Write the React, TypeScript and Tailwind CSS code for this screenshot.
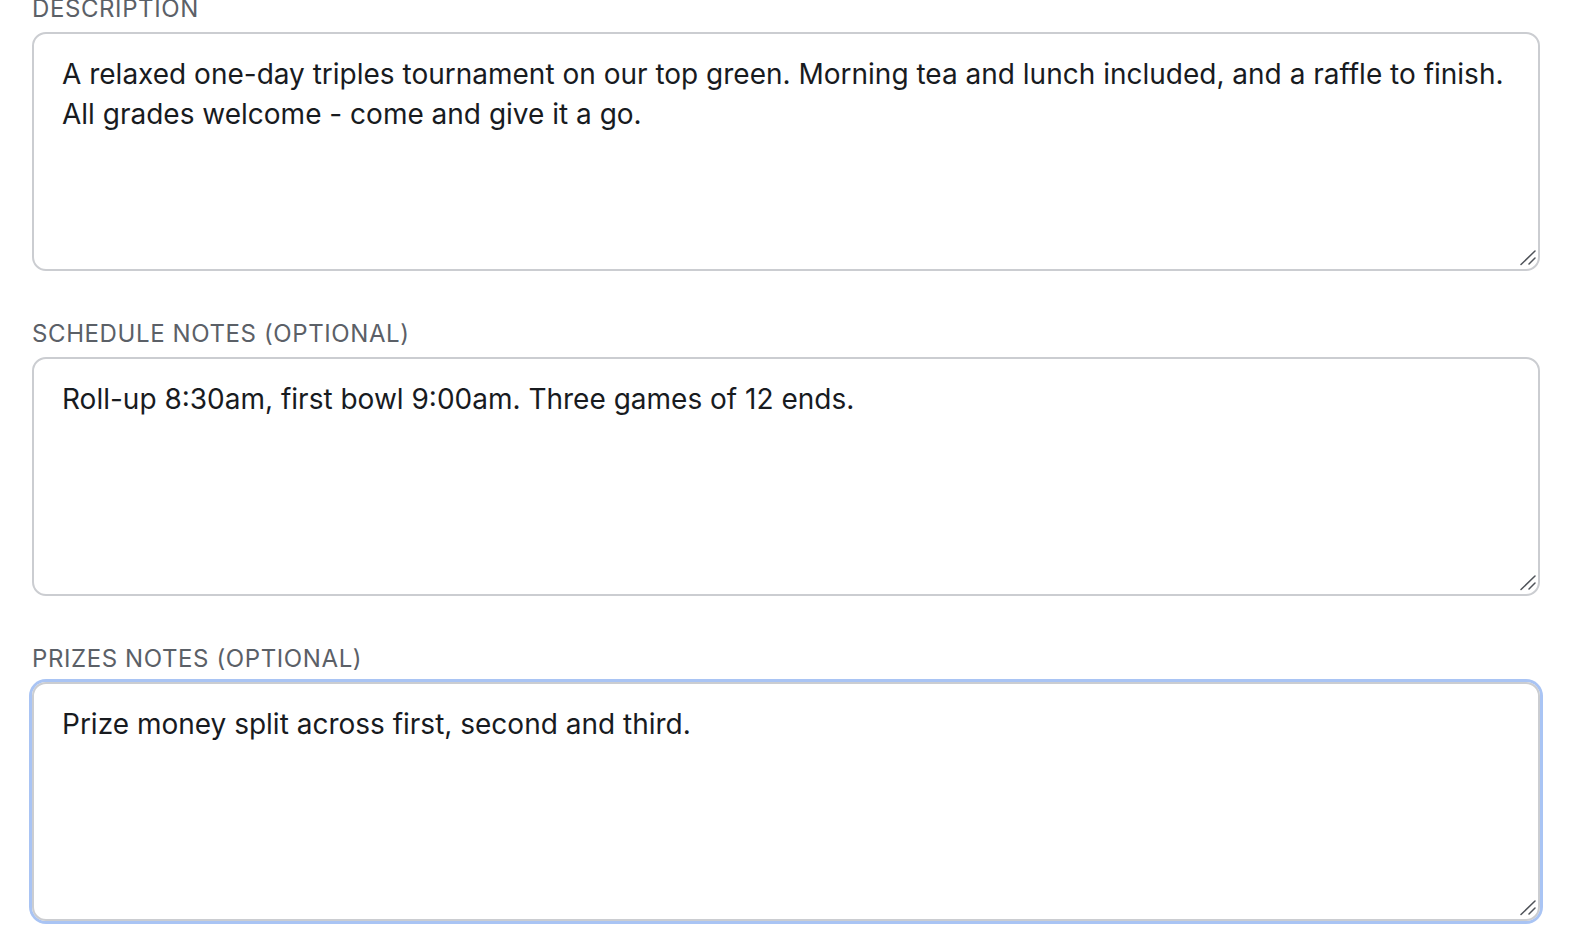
const fields = [
  {
    label: 'Description',
    value:
      'A relaxed one-day triples tournament on our top green. Morning tea and lunch included, and a raffle to finish. All grades welcome - come and give it a go.',
    focused: false,
  },
  {
    label: 'Schedule notes (optional)',
    value: 'Roll-up 8:30am, first bowl 9:00am. Three games of 12 ends.',
    focused: false,
  },
  {
    label: 'Prizes notes (optional)',
    value: 'Prize money split across first, second and third.',
    focused: true,
  },
]

// stand-in for the browser's resize grip, drawn the size it shows in the screenshot
function Grip() {
  return (
    <svg
      width="16"
      height="16"
      viewBox="0 0 16 16"
      className="pointer-events-none absolute right-[4px] bottom-[5px]"
    >
      <path d="M1 14.5L15 1M9 14L15 8" stroke="#50545a" strokeWidth="1.5" strokeLinecap="round" />
    </svg>
  )
}

export default function App() {
  return (
    <div className="min-h-screen bg-white px-[32px] font-['Inter','Liberation_Sans',sans-serif]">
      <div className="-mt-[6px] flex flex-col gap-[48px]">
        {fields.map((f) => (
          <div key={f.label} className="flex flex-col">
            <label className="mb-2 text-[24px] leading-[30px] uppercase tracking-[0.025em] text-[#5b6067]">
              {f.label}
            </label>
            <div className="relative">
              <textarea
                defaultValue={f.value}
                className={
                  f.focused
                    ? 'block h-[239px] w-full resize-none rounded-[14px] border-2 border-[#cbcdd1] px-[28px] py-5 text-[28px] leading-[40px] text-[#181b1f] outline-none shadow-[0_0_0_3px_#a9c4f4]'
                    : 'block h-[239px] w-full resize-none rounded-[14px] border-2 border-[#cbcdd1] px-[28px] py-5 text-[28px] leading-[40px] text-[#181b1f] outline-none'
                }
              />
              <Grip />
            </div>
          </div>
        ))}
      </div>
    </div>
  )
}
